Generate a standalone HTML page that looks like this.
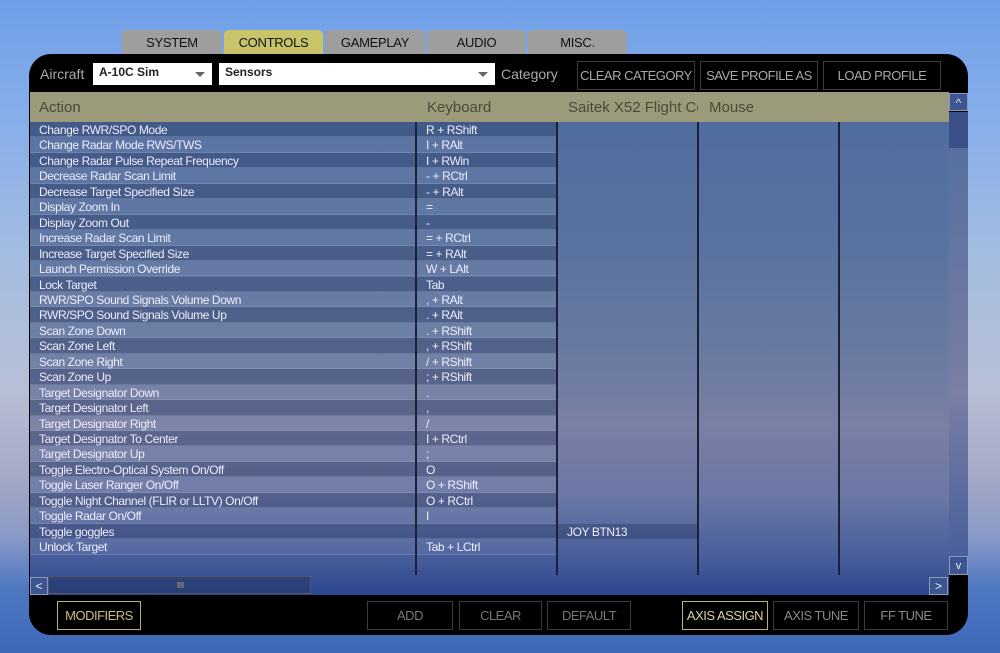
<!DOCTYPE html>
<html><head><meta charset="utf-8"><style>
*{margin:0;padding:0;box-sizing:border-box}
body{width:1000px;height:653px;overflow:hidden;position:relative;font-family:"Liberation Sans","DejaVu Sans",sans-serif;
background:linear-gradient(180deg,#6f9fe8 0%,#86aeea 18%,#a5bde0 40%,#b7bfd6 60%,#a6aac6 72%,#8a9ac6 82%,#4f78c2 90%,#3d68b8 100%);}
.abs{position:absolute}
.tab{position:absolute;top:30px;height:24px;background:#9e9e9e;border-radius:5px 5px 0 0;font-size:13px;color:#111;text-align:center;line-height:26px;letter-spacing:-.3px}
.panel{left:29px;top:54px;width:939px;height:581px;background:#000;border-radius:22px}
.sel{background:#fff;height:22px;top:63px;font-size:12px;font-weight:bold;color:#222;padding:2px 6px}
.arrow{position:absolute;right:7px;top:9px;width:0;height:0;border-left:5px solid transparent;border-right:5px solid transparent;border-top:5px solid #666}
.btn{position:absolute;border:1px solid #3c3c3c;color:#a8a8a8;font-size:13px;text-align:center;white-space:nowrap;letter-spacing:-.5px;overflow:hidden}
.table{left:30px;top:92px;width:919px;height:503px;background:linear-gradient(180deg,#4e6b9e 0%,#5a72a0 30%,#687aa2 50%,#7a7fa4 66%,#6c78a6 80%,#4a5f9c 92%,#2c4690 100%);overflow:hidden}
.hdr{position:absolute;left:0;top:0;width:919px;height:30px;background:#9b9b7c;color:#4a4a3a;font-size:15px;line-height:31px}
.row{position:absolute;left:0;height:15.45px;font-size:12px;color:#eef;line-height:16px;letter-spacing:-.4px;white-space:nowrap}
.row .a{position:absolute;left:0;width:385px;height:100%;padding-left:9px;border-bottom:1px solid rgba(160,170,200,.3)}
.row .k{position:absolute;left:387px;width:139px;height:100%;padding-left:9px;border-bottom:1px solid rgba(160,170,200,.3)}
.d .a,.d .k{background:rgba(40,55,95,.35)}
.l .a,.l .k{background:rgba(150,160,190,.15)}
.vl{position:absolute;top:30px;width:2px;height:453px;background:#1a2238}
.sb{position:absolute;background:#3d5590;border:1px solid #8a9ab8}
</style></head><body>
<div class="tab" style="left:122px;width:100px">SYSTEM</div>
<div class="tab" style="left:224px;width:99px;background:#c9c46a">CONTROLS</div>
<div class="tab" style="left:325px;width:100px">GAMEPLAY</div>
<div class="tab" style="left:427px;width:99px">AUDIO</div>
<div class="tab" style="left:528px;width:99px">MISC.</div>
<div class="abs panel"></div>
<div class="abs" style="left:40px;top:66px;font-size:14px;color:#aaa">Aircraft</div>
<div class="abs sel" style="left:93px;width:119px">A-10C Sim<div class="arrow"></div></div>
<div class="abs sel" style="left:219px;width:276px">Sensors<div class="arrow"></div></div>
<div class="abs" style="left:501px;top:66px;font-size:14px;color:#aaa">Category</div>
<div class="btn" style="left:577px;top:61px;width:118px;height:29px;line-height:27px">CLEAR CATEGORY</div>
<div class="btn" style="left:700px;top:61px;width:118px;height:29px;line-height:27px">SAVE PROFILE AS</div>
<div class="btn" style="left:823px;top:61px;width:118px;height:29px;line-height:27px">LOAD PROFILE</div>
<div class="abs table">
<div class="hdr"><span style="position:absolute;left:9px">Action</span><span style="position:absolute;left:397px">Keyboard</span><span style="position:absolute;left:538px;width:130px;overflow:hidden;white-space:nowrap">Saitek X52 Flight Control</span><span style="position:absolute;left:679px">Mouse</span></div>
<div class="vl" style="left:385px"></div><div class="vl" style="left:526px"></div><div class="vl" style="left:667px"></div><div class="vl" style="left:808px"></div>
<div class="row d" style="top:30px"><div class="a">Change RWR/SPO Mode</div><div class="k">R + RShift</div></div>
<div class="row l" style="top:45.45px"><div class="a">Change Radar Mode RWS/TWS</div><div class="k">I + RAlt</div></div>
<div class="row d" style="top:60.9px"><div class="a">Change Radar Pulse Repeat Frequency</div><div class="k">I + RWin</div></div>
<div class="row l" style="top:76.35px"><div class="a">Decrease Radar Scan Limit</div><div class="k">- + RCtrl</div></div>
<div class="row d" style="top:91.8px"><div class="a">Decrease Target Specified Size</div><div class="k">- + RAlt</div></div>
<div class="row l" style="top:107.25px"><div class="a">Display Zoom In</div><div class="k">=</div></div>
<div class="row d" style="top:122.7px"><div class="a">Display Zoom Out</div><div class="k">-</div></div>
<div class="row l" style="top:138.15px"><div class="a">Increase Radar Scan Limit</div><div class="k">= + RCtrl</div></div>
<div class="row d" style="top:153.6px"><div class="a">Increase Target Specified Size</div><div class="k">= + RAlt</div></div>
<div class="row l" style="top:169.05px"><div class="a">Launch Permission Override</div><div class="k">W + LAlt</div></div>
<div class="row d" style="top:184.5px"><div class="a">Lock Target</div><div class="k">Tab</div></div>
<div class="row l" style="top:199.95px"><div class="a">RWR/SPO Sound Signals Volume Down</div><div class="k">, + RAlt</div></div>
<div class="row d" style="top:215.4px"><div class="a">RWR/SPO Sound Signals Volume Up</div><div class="k">. + RAlt</div></div>
<div class="row l" style="top:230.85px"><div class="a">Scan Zone Down</div><div class="k">. + RShift</div></div>
<div class="row d" style="top:246.3px"><div class="a">Scan Zone Left</div><div class="k">, + RShift</div></div>
<div class="row l" style="top:261.75px"><div class="a">Scan Zone Right</div><div class="k">/ + RShift</div></div>
<div class="row d" style="top:277.2px"><div class="a">Scan Zone Up</div><div class="k">; + RShift</div></div>
<div class="row l" style="top:292.65px"><div class="a">Target Designator Down</div><div class="k">.</div></div>
<div class="row d" style="top:308.1px"><div class="a">Target Designator Left</div><div class="k">,</div></div>
<div class="row l" style="top:323.55px"><div class="a">Target Designator Right</div><div class="k">/</div></div>
<div class="row d" style="top:339px"><div class="a">Target Designator To Center</div><div class="k">I + RCtrl</div></div>
<div class="row l" style="top:354.45px"><div class="a">Target Designator Up</div><div class="k">;</div></div>
<div class="row d" style="top:369.9px"><div class="a">Toggle Electro-Optical System On/Off</div><div class="k">O</div></div>
<div class="row l" style="top:385.35px"><div class="a">Toggle Laser Ranger On/Off</div><div class="k">O + RShift</div></div>
<div class="row d" style="top:400.8px"><div class="a">Toggle Night Channel (FLIR or LLTV) On/Off</div><div class="k">O + RCtrl</div></div>
<div class="row l" style="top:416.25px"><div class="a">Toggle Radar On/Off</div><div class="k">I</div></div>
<div class="row d" style="top:431.7px"><div class="a">Toggle goggles</div><div class="k"></div><div style="position:absolute;left:528px;width:139px;height:100%;padding-left:9px;background:rgba(40,55,95,.4)">JOY BTN13</div></div>
<div class="row l" style="top:447.15px"><div class="a">Unlock Target</div><div class="k">Tab + LCtrl</div></div>
<div style="position:absolute;left:18px;top:484px;width:263px;height:18px;background:rgba(40,60,110,.7);border:1px solid #556;"><div style="position:absolute;left:128px;top:5px;width:7px;height:6px;background:#667"></div></div>
</div>
<div class="sb" style="left:949px;top:93px;width:19px;height:18px;color:#dde;font-size:12px;text-align:center;line-height:18px">^</div>
<div class="abs" style="left:949px;top:112px;width:19px;height:36px;background:#3b5088"></div>
<div class="abs" style="left:949px;top:148px;width:19px;height:408px;background:linear-gradient(180deg,#5670a0,#7a7fa4 60%,#4a5f9c)"></div>
<div class="sb" style="left:949px;top:556px;width:19px;height:19px;color:#dfe;font-size:11px;text-align:center;line-height:18px">v</div>
<div class="sb" style="left:30px;top:577px;width:18px;height:18px;color:#dfe;font-size:12px;text-align:center;line-height:17px">&lt;</div>
<div class="sb" style="left:929px;top:577px;width:19px;height:18px;color:#dfe;font-size:12px;text-align:center;line-height:17px">&gt;</div>
<div class="btn" style="left:57px;top:601px;width:84px;height:29px;line-height:27px;border-color:#b8b27a;color:#c6bf7a">MODIFIERS</div>
<div class="btn" style="left:367px;top:601px;width:86px;height:29px;line-height:27px;color:#777">ADD</div>
<div class="btn" style="left:459px;top:601px;width:83px;height:29px;line-height:27px;color:#777">CLEAR</div>
<div class="btn" style="left:547px;top:601px;width:84px;height:29px;line-height:27px;color:#777">DEFAULT</div>
<div class="btn" style="left:682px;top:601px;width:86px;height:29px;line-height:27px;border-color:#b8b27a;color:#d8d2a0">AXIS ASSIGN</div>
<div class="btn" style="left:773px;top:601px;width:86px;height:29px;line-height:27px;color:#888">AXIS TUNE</div>
<div class="btn" style="left:864px;top:601px;width:84px;height:29px;line-height:27px;color:#888">FF TUNE</div>
</body></html>
